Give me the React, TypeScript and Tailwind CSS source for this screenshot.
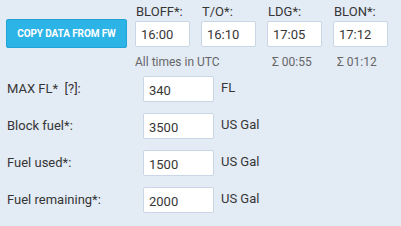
import React from "react";

const font = { fontFamily: "Roboto, 'Liberation Sans', sans-serif" };

const rows = [
  { label: "MAX FL*  [?]:", value: "340", unit: "FL" },
  { label: "Block fuel*:", value: "3500", unit: "US Gal" },
  { label: "Fuel used*:", value: "1500", unit: "US Gal" },
  { label: "Fuel remaining*:", value: "2000", unit: "US Gal" },
];

const times = [
  { label: "BLOFF*:", value: "16:00" },
  { label: "T/O*:", value: "16:10" },
  { label: "LDG*:", value: "17:05" },
  { label: "BLON*:", value: "17:12" },
];

export default function App() {
  return (
    <div
      className="w-[401px] h-[226px] bg-[#e3ebf5] text-[#363636] pl-[6px] pt-[4px] overflow-hidden"
      style={font}
    >
      <div className="grid grid-cols-[129px_66px_66px_66px_66px] grid-rows-[15px_29px_auto]">
        <div />
        {times.map((t) => (
          <div key={t.label} className="text-[13px] leading-[15px] pl-[1px]">
            {t.label}
          </div>
        ))}
        <button className="w-[121px] h-[29px] rounded-[2px] bg-[#2db4e6] border border-[#22a3d6] text-white text-[10px] font-bold tracking-[-0.1px] flex items-center justify-center">
          COPY DATA FROM FW
        </button>
        {times.map((t) => (
          <div key={t.value} className="flex items-center">
            <div className="w-[55px] h-[26px] bg-white border border-[#c9d6e6] rounded-[2px] text-[13px] leading-[24px] pl-[5px] pt-[1px]">
              {t.value}
            </div>
          </div>
        ))}
        <div />
        <div className="col-span-2 text-[12px] leading-[14px] text-[#666666] mt-[7px]">All times in UTC</div>
        <div className="text-[12px] leading-[14px] text-[#666666] mt-[7px] pl-[5px]">Σ 00:55</div>
        <div className="text-[12px] leading-[14px] text-[#666666] mt-[7px] pl-[4px]">Σ 01:12</div>
      </div>
      <div className="flex flex-col gap-[11px] mt-[7px]">
        {rows.map((r) => (
          <div key={r.label} className="flex items-center h-[26px]">
            <div className="w-[137px] text-[13px] pl-[1px] whitespace-pre">{r.label}</div>
            <div className="w-[71px] h-[26px] bg-white border border-[#c9d6e6] rounded-[2px] text-[13px] leading-[24px] pl-[5px] pt-[2px]">
              {r.value}
            </div>
            <div className="ml-[7px] text-[13px] -mt-[3px]">{r.unit}</div>
          </div>
        ))}
      </div>
    </div>
  );
}
